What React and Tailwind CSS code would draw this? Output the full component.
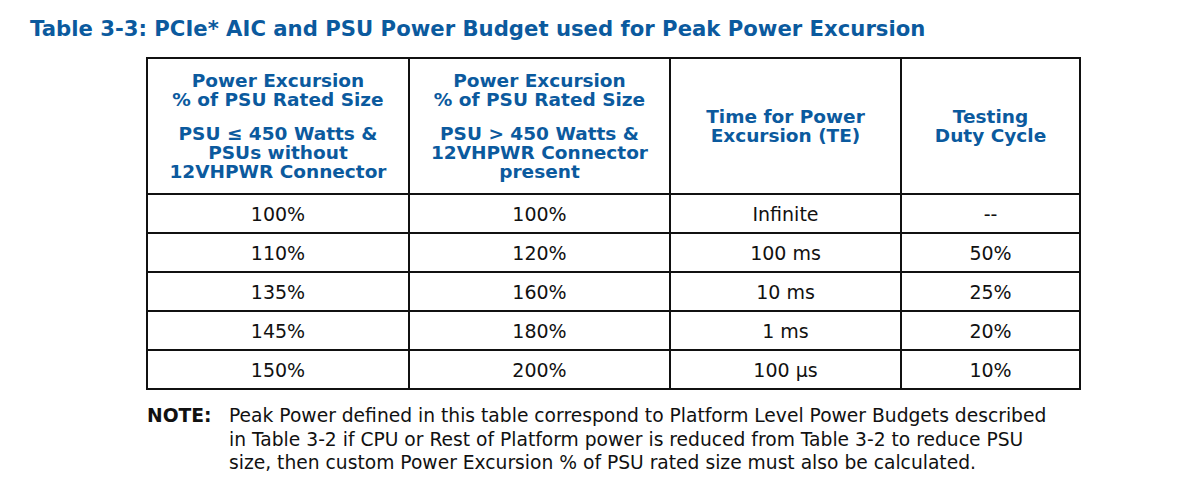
import React from 'react';

const rows = [
  ['100%', '100%', 'Infinite', '--'],
  ['110%', '120%', '100 ms', '50%'],
  ['135%', '160%', '10 ms', '25%'],
  ['145%', '180%', '1 ms', '20%'],
  ['150%', '200%', '100 µs', '10%'],
];

const HeadCell = ({ children }) => (
  <th className="border-2 border-[#111] align-middle text-center font-bold text-[#0b5a9e] text-[18.5px] leading-[19px] px-1">
    {children}
  </th>
);

const App = () => {
  return (
    <div className="w-[1200px] h-[477px] bg-white font-['DejaVu_Sans',Verdana,sans-serif] pt-[17px] pl-[30px]">
      <h1 className="text-[21.2px] leading-[24px] font-bold text-[#0b5a9e] whitespace-nowrap">
        Table 3-3: PCIe* AIC and PSU Power Budget used for Peak Power Excursion
      </h1>

      <table className="ml-[116px] mt-[16px] w-[933px] table-fixed border-collapse">
        <colgroup>
          <col className="w-[262px]" />
          <col className="w-[261px]" />
          <col className="w-[231px]" />
          <col className="w-[179px]" />
        </colgroup>
        <thead>
          <tr className="h-[136px]">
            <HeadCell>
              <p>Power Excursion<br />% of PSU Rated Size</p>
              <p className="mt-[15px]">PSU ≤ 450 Watts &amp;<br />PSUs without<br />12VHPWR Connector</p>
            </HeadCell>
            <HeadCell>
              <p>Power Excursion<br />% of PSU Rated Size</p>
              <p className="mt-[15px]">PSU &gt; 450 Watts &amp;<br />12VHPWR Connector<br />present</p>
            </HeadCell>
            <HeadCell>
              <p>Time for Power<br />Excursion (TE)</p>
            </HeadCell>
            <HeadCell>
              <p>Testing<br />Duty Cycle</p>
            </HeadCell>
          </tr>
        </thead>
        <tbody>
          {rows.map((row, i) => (
            <tr key={i} className="h-[39px]">
              {row.map((cell, j) => (
                <td key={j} className="border-2 border-[#111] text-center text-[19px] leading-[20px] text-[#111]">
                  {cell}
                </td>
              ))}
            </tr>
          ))}
        </tbody>
      </table>

      <div className="ml-[117px] mt-[14px] flex text-[18.7px] leading-[23.5px] text-[#111]">
        <span className="w-[82px] shrink-0 font-bold">NOTE:</span>
        <p className="whitespace-nowrap">
          Peak Power defined in this table correspond to Platform Level Power Budgets described<br />
          in Table 3-2 if CPU or Rest of Platform power is reduced from Table 3-2 to reduce PSU<br />
          size, then custom Power Excursion % of PSU rated size must also be calculated.
        </p>
      </div>
    </div>
  );
};

export default App;
